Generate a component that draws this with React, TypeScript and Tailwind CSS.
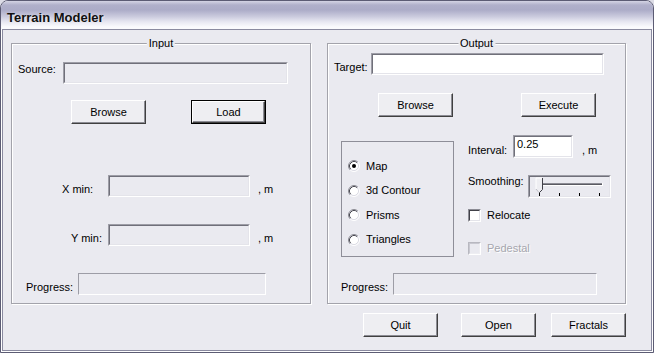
import React from "react";

const face = "bg-[#eaeaf0]";

function Btn({ label, isDefault = false }: { label: string; isDefault?: boolean }) {
  const inner = (
    <div className="flex h-full w-full items-center justify-center border border-t-white border-l-white border-r-[#404040] border-b-[#404040] bg-[#eeeef2] shadow-[inset_-1px_-1px_0_#8c8c94]">
      {label}
    </div>
  );
  if (isDefault) {
    return <div className="h-[24px] w-[75px] shrink-0 border border-black">{inner}</div>;
  }
  return <div className="h-[24px] w-[75px] shrink-0">{inner}</div>;
}

function Field({
  className,
  white = false,
  children,
}: {
  className: string;
  white?: boolean;
  children?: React.ReactNode;
}) {
  return (
    <div
      className={`shrink-0 border border-t-[#9d9da6] border-l-[#9d9da6] border-r-white border-b-white ${className}`}
    >
      <div
        className={`h-full w-full border border-t-[#70707a] border-l-[#70707a] border-r-[#e4e4ea] border-b-[#e4e4ea] ${
          white ? "bg-white" : ""
        }`}
      >
        {children}
      </div>
    </div>
  );
}

function Group({
  title,
  className,
  children,
}: {
  title: string;
  className: string;
  children: React.ReactNode;
}) {
  return (
    <div
      className={`relative flex flex-col border border-[#a3a3ab] shadow-[inset_1px_1px_0_#fff,1px_1px_0_#fff] ${className}`}
    >
      <span className={`absolute -top-[7px] left-1/2 -translate-x-1/2 px-[2px] ${face}`}>{title}</span>
      {children}
    </div>
  );
}

function Radio({ checked = false, label }: { checked?: boolean; label: string }) {
  return (
    <div className="flex h-[24.5px] items-center">
      <svg width="12" height="12" viewBox="0 0 12 12" className="shrink-0">
        <circle cx="6" cy="6" r="4.5" fill="#fff" />
        <path d="M2.11 9.89 A5.5 5.5 0 0 1 9.89 2.11" fill="none" stroke="#8c8c94" />
        <path d="M9.89 2.11 A5.5 5.5 0 0 1 2.11 9.89" fill="none" stroke="#fff" />
        <path d="M2.82 9.18 A4.5 4.5 0 0 1 9.18 2.82" fill="none" stroke="#4a4a52" />
        <path d="M9.18 2.82 A4.5 4.5 0 0 1 2.82 9.18" fill="none" stroke="#dcdce4" />
        {checked && <circle cx="6" cy="6" r="2" fill="#000" />}
      </svg>
      <span className="ml-[6px]">{label}</span>
    </div>
  );
}

function Check({ label, disabled = false }: { label: string; disabled?: boolean }) {
  return (
    <div className="flex items-center">
      <div
        className={`h-[13px] w-[13px] border ${
          disabled
            ? "border-t-[#b8b8c0] border-l-[#b8b8c0] border-r-white border-b-white"
            : "border-t-[#8c8c94] border-l-[#8c8c94] border-r-white border-b-white"
        }`}
      >
        <div
          className={`h-full w-full border ${
            disabled
              ? "border-t-[#c8c8d0] border-l-[#c8c8d0] border-r-[#eeeef2] border-b-[#eeeef2] bg-[#eaeaf0]"
              : "border-t-[#404048] border-l-[#404048] border-r-[#e4e4ea] border-b-[#e4e4ea] bg-white"
          }`}
        />
      </div>
      <span
        className={`ml-[6px] ${disabled ? "text-[#a6a6ae] [text-shadow:1px_1px_0_#fff]" : ""}`}
      >
        {label}
      </span>
    </div>
  );
}

function Slider() {
  return (
    <Field className="h-[23px] w-[83px]">
      <svg width="79" height="19" viewBox="0 0 79 19">
        <rect x="8" y="6" width="64" height="1" fill="#8c8c94" />
        <rect x="8" y="7" width="64" height="1" fill="#5a5a62" />
        <rect x="8" y="8" width="64" height="1" fill="#fff" />
        <rect x="72" y="6" width="1" height="3" fill="#fff" />
        <polygon points="6,1 12,1 12,12 9,15 6,12" fill="#eeeef2" />
        <polyline points="6,12 6,1 12,1" fill="none" stroke="#fff" strokeWidth="1" />
        <polyline points="12.5,1 12.5,12.5 9,16" fill="none" stroke="#404048" strokeWidth="1" />
        <line x1="6" y1="12" x2="9" y2="15.5" stroke="#c0c0c8" strokeWidth="1" />
        <rect x="9" y="16" width="1" height="3" fill="#000" />
        <rect x="29" y="16" width="1" height="3" fill="#000" />
        <rect x="49" y="16" width="1" height="3" fill="#000" />
        <rect x="69" y="16" width="1" height="3" fill="#000" />
      </svg>
    </Field>
  );
}

function Progress({ className }: { className: string }) {
  return (
    <div className={`h-[22px] shrink-0 border border-t-[#9d9da6] border-l-[#9d9da6] border-r-white border-b-white ${className}`} />
  );
}

export default function App() {
  return (
    <div className="h-[353px] w-[654px] bg-[#dcdce6] font-['Liberation_Sans',Arial,sans-serif] text-[11px] leading-[13px] text-black">
      <div className={`flex h-full flex-col overflow-hidden rounded-t-[8px] border border-[#5c5c74] ${face}`}>
        {/* title bar */}
        <div className="h-[28px] shrink-0 bg-[linear-gradient(to_bottom,#d4d4e4_0px,#b0b0ca_4px,#acacc8_9px,#c8c8dc_15px,#e8e8f2_21px,#fafafd_26px)] pl-[6px] pt-[9px] text-[13px] leading-[15px] font-bold text-[#111] [text-shadow:1px_1px_0_#e8e8f0]">
          Terrain Modeler
        </div>

        <div className="flex flex-1 flex-col border-x border-b border-white">
          <div className="flex flex-1 flex-col border border-[#8a8aa0] pl-[8px] pt-[13px]">
            <div className="flex gap-[16px]">
              {/* Input */}
              <Group title="Input" className="h-[261px] w-[300px]">
                <div className="mt-[18px] flex items-start pl-[6px]">
                  <span className="mt-[1px] w-[45px]">Source:</span>
                  <Field className="h-[22px] w-[225px]" />
                </div>
                <div className="mt-[16px] flex pl-[59px]">
                  <Btn label="Browse" />
                  <div className="ml-[45px]">
                    <Btn label="Load" isDefault />
                  </div>
                </div>
                <div className="mt-[51px] flex items-start pl-[50px]">
                  <span className="mt-[8px] w-[46px]">X min:</span>
                  <Field className="h-[22px] w-[142px]" />
                  <span className="ml-[8px] mt-[8px]">, m</span>
                </div>
                <div className="mt-[27px] flex items-start pl-[59px]">
                  <span className="mt-[8px] w-[37px]">Y min:</span>
                  <Field className="h-[22px] w-[142px]" />
                  <span className="ml-[8px] mt-[8px]">, m</span>
                </div>
                <div className="mt-[27px] flex items-start pl-[14px]">
                  <span className="mt-[8px] w-[52px]">Progress:</span>
                  <Progress className="w-[188px]" />
                </div>
              </Group>

              {/* Output */}
              <Group title="Output" className="h-[261px] w-[299px]">
                <div className="mt-[9px] flex items-start pl-[6px]">
                  <span className="mt-[8px] w-[37px]">Target:</span>
                  <Field className="h-[22px] w-[233px]" white />
                </div>
                <div className="mt-[18px] flex pl-[50px]">
                  <Btn label="Browse" />
                  <div className="ml-[68px]">
                    <Btn label="Execute" />
                  </div>
                </div>
                <div className="mt-[18px] flex items-start">
                  <div className="ml-[13px] mt-[6px] h-[116px] w-[113px] border border-[#8e8e98] pl-[6px] pt-[12px]">
                    <Radio label="Map" checked />
                    <Radio label="3d Contour" />
                    <Radio label="Prisms" />
                    <Radio label="Triangles" />
                  </div>
                  <div className="ml-[14px] flex flex-col">
                    <div className="flex items-start">
                      <span className="mt-[9px] w-[45px]">Interval:</span>
                      <Field className="h-[23px] w-[60px]" white>
                        <div className="pl-[2px] pt-[1px]">0.25</div>
                      </Field>
                      <span className="ml-[9px] mt-[9px]">, m</span>
                    </div>
                    <div className="mt-[17px] flex items-start">
                      <span className="w-[60px]">Smoothing:</span>
                      <Slider />
                    </div>
                    <div className="mt-[11px]">
                      <Check label="Relocate" />
                    </div>
                    <div className="mt-[20px]">
                      <Check label="Pedestal" disabled />
                    </div>
                  </div>
                </div>
                <div className="mt-[16px] flex items-start pl-[13px]">
                  <span className="mt-[8px] w-[52px]">Progress:</span>
                  <Progress className="w-[204px]" />
                </div>
              </Group>
            </div>

            <div className="ml-[352px] mt-[9px] flex">
              <Btn label="Quit" />
              <div className="ml-[23px]">
                <Btn label="Open" />
              </div>
              <div className="ml-[15px]">
                <Btn label="Fractals" />
              </div>
            </div>
          </div>
        </div>
      </div>
    </div>
  );
}
